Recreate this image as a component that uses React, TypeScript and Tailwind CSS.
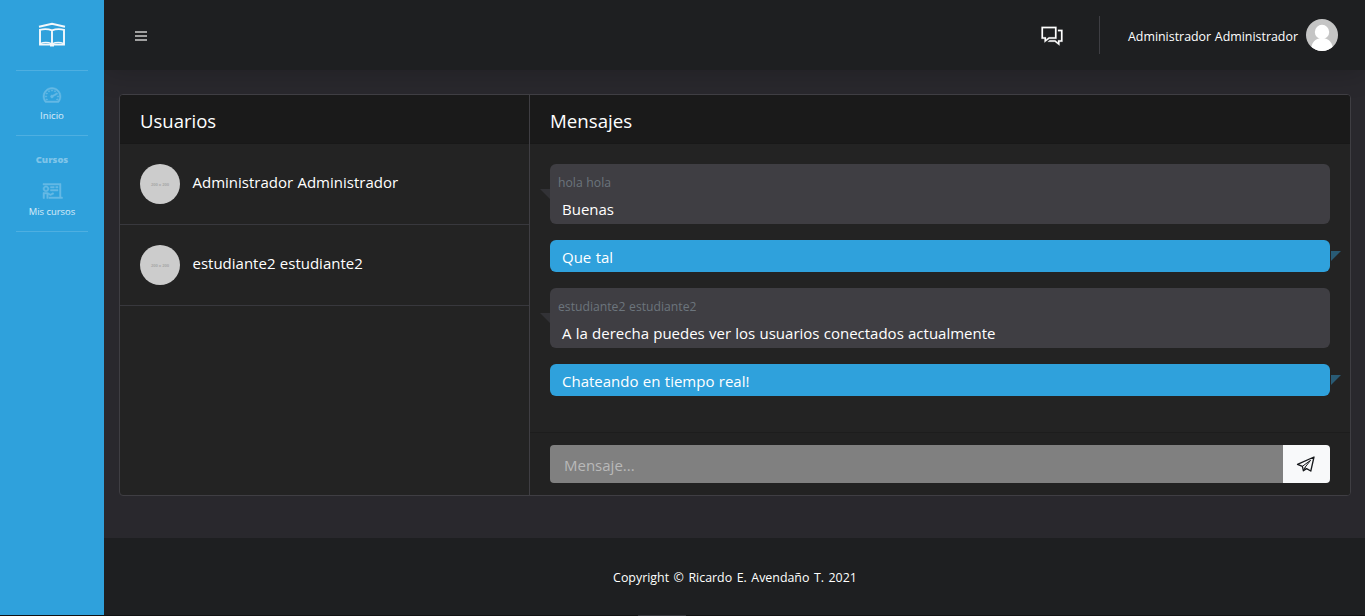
import { LiaTachometerAltSolid, LiaChalkboardTeacherSolid, LiaComments } from "react-icons/lia";

type Message = { text: string; author?: string };

const users = ["Administrador Administrador", "estudiante2 estudiante2"];

const messages: Message[] = [
  { author: "hola hola", text: "Buenas" },
  { text: "Que tal" },
  { author: "estudiante2 estudiante2", text: "A la derecha puedes ver los usuarios conectados actualmente" },
  { text: "Chateando en tiempo real!" },
];

function BookLogo() {
  return (
    <svg viewBox="0 0 28 26" className="h-[26px] w-7" fill="none" stroke="#f4f8fb" strokeWidth="1.9">
      <path d="M1 5.8 14 2.8 27 5.8" />
      <path d="M14 9.4C10 7.8 6 7.8 2 8.8V23.6H26V8.8C22 7.8 18 7.8 14 9.4V23" />
      <path d="M2 22.6C6 21.2 10 21.2 14 22.8C18 21.2 22 21.2 26 22.6" strokeWidth="1.4" />
      <path d="M12 24.2h4" strokeWidth="2.6" />
    </svg>
  );
}

function PlaneIcon() {
  return (
    <svg viewBox="0 0 20 18" className="mr-0.5 h-[18px] w-5" fill="none" stroke="#17191c" strokeWidth="1.3" strokeLinejoin="round">
      <path d="M1.5 9.4 18 2 14.8 16 10.6 13.6 7.4 15.8 6.4 11.3Z" />
      <path d="M6.4 11.3 14.6 5.3 8.9 12.5 7.4 15.8M8.9 12.5l1.7 1.1" strokeWidth="1" />
    </svg>
  );
}

function Sidebar() {
  return (
    <aside className="relative z-10 flex w-[104px] shrink-0 flex-col items-center bg-[#2fa1dc] text-white">
      <div className="flex h-[70px] items-center justify-center pb-[3px]">
        <BookLogo />
      </div>
      <div className="h-px w-[72px] bg-white/15" />
      <div className="flex h-16 flex-col items-center pt-3 text-[9.6px] leading-[17px]">
        <LiaTachometerAltSolid size={24} stroke="currentColor" strokeWidth={0.6} className="text-[#65b9e5]" />
        <span className="text-white/80">Inicio</span>
      </div>
      <div className="h-px w-[72px] bg-white/15" />
      <div className="pt-4 text-[9.4px] leading-4 font-extrabold text-white/40">Cursos</div>
      <div className="flex h-[63px] flex-col items-center pt-[11px] text-[9.4px] leading-[17px]">
        <LiaChalkboardTeacherSolid size={24} stroke="currentColor" strokeWidth={0.6} className="text-[#65b9e5]" />
        <span className="text-white/80">Mis cursos</span>
      </div>
      <div className="h-px w-[72px] bg-white/15" />
    </aside>
  );
}

function Topbar() {
  return (
    <header className="flex h-[70px] shrink-0 items-center bg-[#1e1f21] pr-[27px] pl-[31px] shadow-[0_2px_28px_rgba(0,0,0,0.2)]">
      <svg viewBox="0 0 12 10" className="mt-0.5 h-2.5 w-3" fill="#a0a0a0">
        <path d="M0 0h12v2H0ZM0 4h12v2H0ZM0 8h12v2H0Z" />
      </svg>
      <LiaComments size={24} stroke="currentColor" strokeWidth={0.3} className="ml-auto" />
      <div className="ml-[35px] h-[38px] w-px bg-[#3e3e43]" />
      <span className="ml-7 w-[170px] pt-[5px] text-[12.4px] whitespace-nowrap [word-spacing:0.5px]">Administrador Administrador</span>
      <svg viewBox="0 0 32 32" className="ml-2 size-8 rounded-full">
        <rect width="32" height="32" fill="#c5c5c5" />
        <circle cx="16" cy="13" r="7.2" fill="#fff" />
        <path d="M5 32C5 24 9 19 16 19s11 5 11 13Z" fill="#fff" />
      </svg>
    </header>
  );
}

function MessageBubble({ author, text }: Message) {
  return author ? (
    <div className="relative h-[60px] rounded-md bg-[#3f3e43]">
      <svg className="absolute top-[25px] left-[-10px] h-2.5 w-2.5" viewBox="0 0 10 10">
        <path d="M0 0h10v10Z" fill="#323236" />
      </svg>
      <div className="pt-[9px] pl-2 text-[12.2px] leading-5 text-[#6c757d] [word-spacing:0.5px]">{author}</div>
      <div className="pt-1 pl-3 text-[15px] leading-6 [word-spacing:0.35px]">{text}</div>
    </div>
  ) : (
    <div className="relative h-8 rounded-md bg-[#2fa1dc] pt-[5px] pl-3 text-[15px] leading-6 [word-spacing:0.45px]">
      {text}
      <svg className="absolute top-[11px] right-[-11px] h-2.5 w-2.5" viewBox="0 0 10 10">
        <path d="M0 0h10L0 10Z" fill="#295b75" />
      </svg>
    </div>
  );
}

export default function App() {
  return (
    <div className="flex h-[616px] w-[1365px] flex-col overflow-hidden bg-[#29282d] font-['Open_Sans',sans-serif] text-white">
      <div className="flex min-h-0 flex-1">
        <Sidebar />
        <div className="flex min-w-0 flex-1 flex-col">
          <Topbar />
          <main className="flex-1 pt-6 pr-3.5 pl-[15px]">
            <section className="flex h-[402px] overflow-hidden rounded border border-[#3f3e43] bg-[#232323]">
              <div className="w-[410px] border-r border-[#3f3e43]">
                <h2 className="h-[49px] border-b border-[#181818] bg-[#1a1a1a] pt-[11px] pl-5 text-[18.5px] leading-[30px]">Usuarios</h2>
                {users.map((name) => (
                  <div key={name} className="flex h-[81px] border-b border-[#38383d] pt-5 pl-5">
                    <div className="flex size-10 items-center justify-center rounded-full bg-[#cccccc] pt-px text-[4px] font-bold text-[#a8a8a8]">200 x 200</div>
                    <span className="ml-[12.5px] pt-[6px] text-[15px] leading-6 [word-spacing:0.45px]">{name}</span>
                  </div>
                ))}
              </div>
              <div className="flex flex-1 flex-col">
                <h2 className="h-[49px] border-b border-[#181818] bg-[#1a1a1a] pt-[11px] pl-5 text-[18.7px] leading-[30px]">Mensajes</h2>
                <div className="flex flex-1 flex-col gap-4 px-5 pt-5">
                  {messages.map((message) => <MessageBubble key={message.text} {...message} />)}
                </div>
                <form className="flex h-[63px] border-t border-[#1d1d1d] bg-[#222222] px-5 py-3" onSubmit={(e) => e.preventDefault()}>
                  <input placeholder="Mensaje..." className="h-[38px] min-w-0 flex-1 rounded-l bg-[#808080] px-3.5 pt-px text-[15px] placeholder:text-[#b9b9b9]" />
                  <button aria-label="Enviar" className="flex h-[38px] w-[47px] items-center justify-center rounded-r bg-[#f8f9fa]">
                    <PlaneIcon />
                  </button>
                </form>
              </div>
            </section>
          </main>
          <footer className="flex h-[77px] flex-col items-center bg-[#1e1f21] pt-[30px] text-[12.4px] leading-5">
            <span className="pl-px [word-spacing:1.3px]">Copyright © Ricardo E. Avendaño T. 2021</span>
          </footer>
        </div>
      </div>
      <div className="flex h-px shrink-0 bg-[#121212] pl-[638px]">
        <div className="h-px w-12 bg-[#343438]" />
      </div>
    </div>
  );
}
